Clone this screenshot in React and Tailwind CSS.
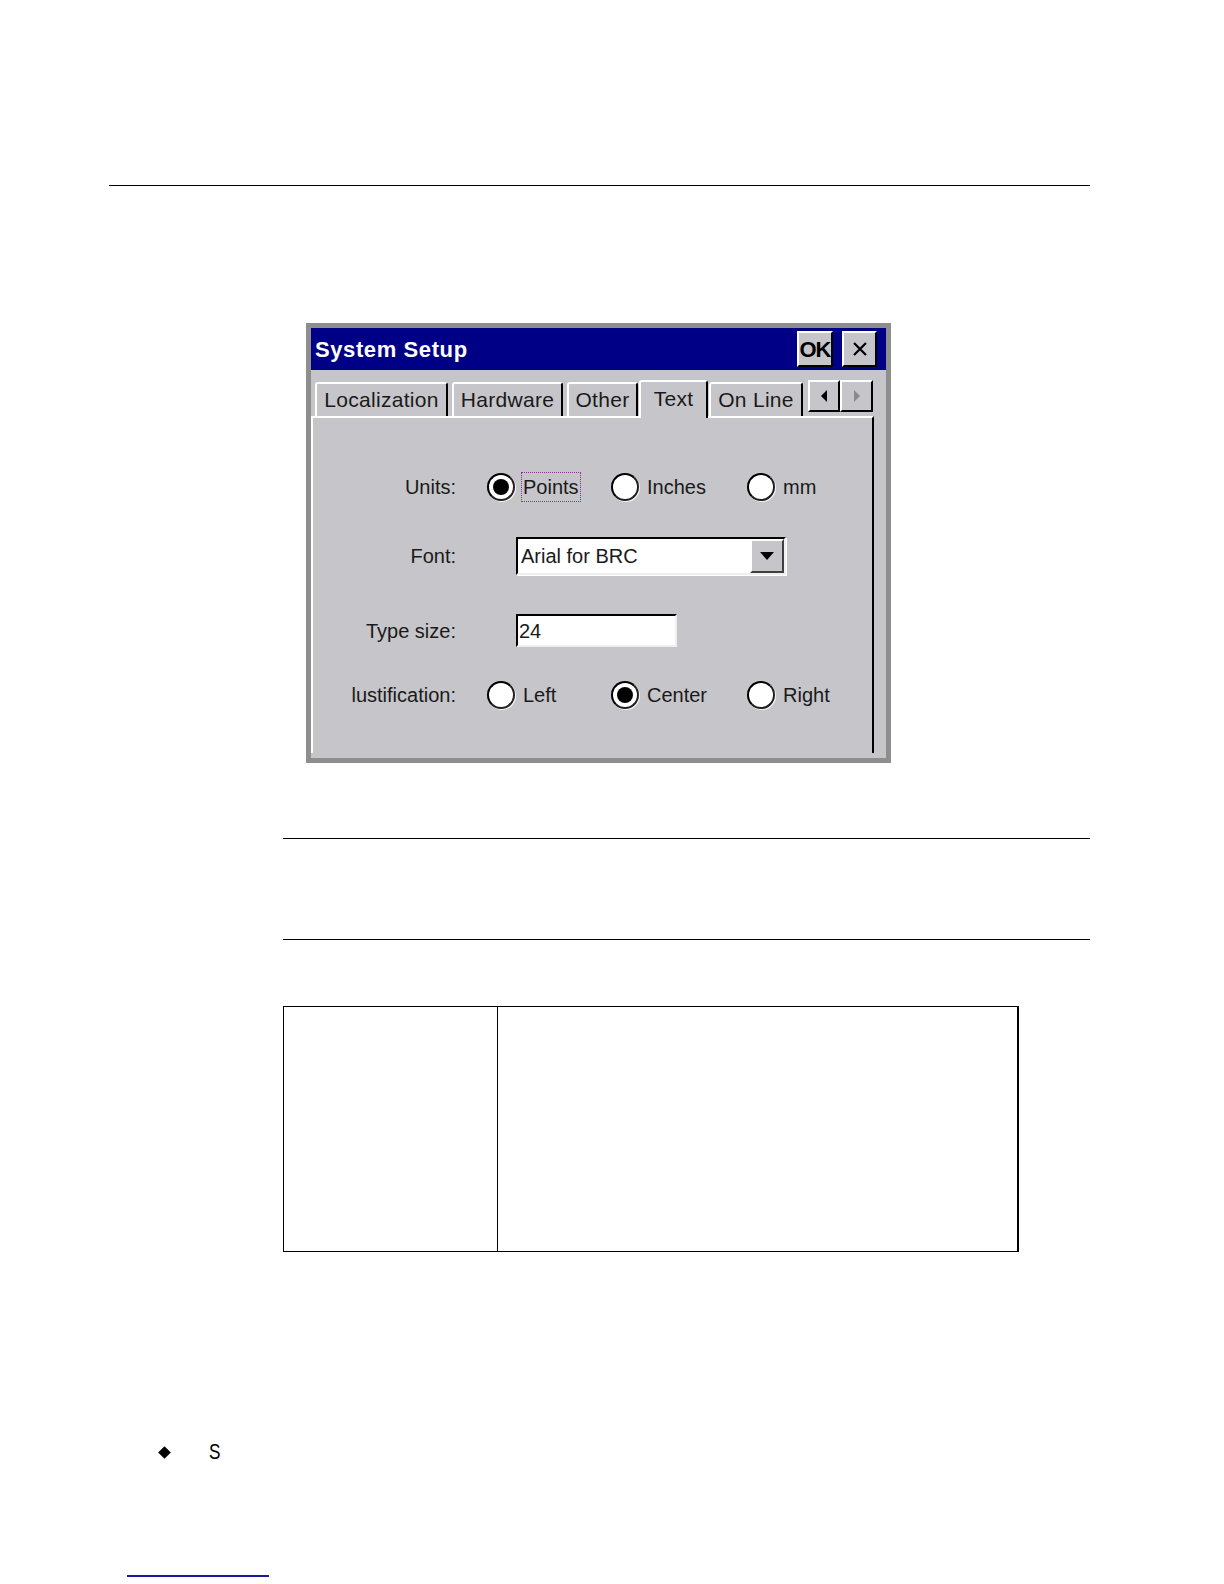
import React from "react";

function Radio({ checked }) {
  return (
    <span className="w-[28px] h-[28px] rounded-full bg-white border-[2.5px] border-t-black border-l-black border-r-[#202020] border-b-[#202020] flex items-center justify-center shadow-[1px_1px_0_#f4f4f4] shrink-0">
      {checked ? <span className="w-[16px] h-[16px] rounded-full bg-black" /> : null}
    </span>
  );
}

function RadioItem({ checked, label, focus, w }) {
  return (
    <div className="flex items-center" style={{ width: w }}>
      <Radio checked={checked} />
      {focus ? (
        <span className="ml-[6px] px-[1px] h-[30px] flex items-center border border-dotted border-[#a020a0]">{label}</span>
      ) : (
        <span className="ml-[8px]">{label}</span>
      )}
    </div>
  );
}

function Tab({ label, w, active, ml }) {
  return (
    <div
      style={{ width: w, marginLeft: ml }}
      className={
        active
          ? "h-[38px] relative z-10 -mb-[2px] bg-[#c6c5c9] border-l-2 border-t-2 border-l-white border-t-white border-r-2 border-r-black rounded-tl-[3px] rounded-tr-[3px] flex items-center justify-center pb-[2px] text-[21px] tracking-[0.3px]"
          : "h-[34px] bg-[#c6c5c9] border-l-2 border-t-2 border-l-white border-t-white border-r-2 border-r-black rounded-tl-[3px] rounded-tr-[3px] flex items-center justify-center text-[21px] tracking-[0.3px]"
      }
    >
      {label}
    </div>
  );
}

export default function App() {
  return (
    <div className="w-[1224px] h-[1584px] bg-white overflow-hidden font-['Liberation_Sans',Arial,sans-serif] text-black">
      <div className="pt-[185px]">
        <div className="ml-[109px] w-[981px] h-px bg-black" />
      </div>

      {/* Dialog screenshot */}
      <div className="mt-[137px] ml-[306px] w-[585px] h-[440px] bg-[#8e8e8e] p-[5px]">
        <div className="w-full h-full bg-[#c6c5c9] flex flex-col text-[20px] text-[#1a1a1a]">
          {/* Title bar */}
          <div className="h-[42px] bg-[#000086] flex items-center justify-between pl-[4px] pr-[9px]">
            <span className="text-white font-bold text-[22px] tracking-[0.6px]">System Setup</span>
            <div className="flex items-center gap-[9px]">
              <div className="w-[36px] h-[36px] bg-[#c6c5c9] border-t-2 border-l-2 border-t-white border-l-white border-b-2 border-r-2 border-b-black border-r-black flex items-center justify-center text-[22px] font-bold text-black tracking-[-1px]">
                OK
              </div>
              <div className="w-[35px] h-[36px] bg-[#c6c5c9] border-t-2 border-l-2 border-t-white border-l-white border-b-2 border-r-2 border-b-black border-r-black flex items-center justify-center">
                <svg width="18" height="18" viewBox="0 0 18 18">
                  <path d="M3 3 L15 15 M15 3 L3 15" stroke="#000" strokeWidth="2.2" />
                </svg>
              </div>
            </div>
          </div>

          {/* Tabs row */}
          <div className="h-[46px] flex items-end">
            <Tab label="Localization" w={133} ml={4} />
            <Tab label="Hardware" w={111} ml={4} />
            <Tab label="Other" w={71} ml={4} />
            <Tab label="Text" w={69} ml={1} active />
            <Tab label="On Line" w={94} ml={1} />
            <div className="ml-[5px] mb-[4px] h-[32px] w-[65px] flex">
              <div className="w-[32px] h-full bg-[#c6c5c9] border-t-2 border-l-2 border-t-white border-l-white border-b-2 border-r-2 border-b-black border-r-black flex items-center justify-center">
                <svg width="8" height="12" viewBox="0 0 8 12"><path d="M7 0 L1 6 L7 12 Z" fill="#000" /></svg>
              </div>
              <div className="w-[33px] h-full bg-[#c6c5c9] border-t-2 border-l-2 border-t-white border-l-white border-b-2 border-r-2 border-b-black border-r-black flex items-center justify-center">
                <svg width="8" height="12" viewBox="0 0 8 12"><path d="M1 0 L7 6 L1 12 Z" fill="#8a8a8a" /></svg>
              </div>
            </div>
          </div>

          {/* Tab body */}
          <div className="flex-1 mr-[12px] mb-[5px] border-l-2 border-l-white border-t-2 border-t-white border-r-2 border-r-black flex flex-col">
            {/* Units */}
            <div className="mt-[54px] h-[30px] flex items-center">
              <div className="w-[143px] text-right">Units:</div>
              <div className="ml-[31px] flex items-center">
                <RadioItem checked label="Points" focus w={124} />
                <RadioItem label="Inches" w={136} />
                <RadioItem label="mm" w={100} />
              </div>
            </div>

            {/* Font */}
            <div className="mt-[35px] h-[38px] flex items-center">
              <div className="w-[143px] text-right">Font:</div>
              <div className="ml-[60px] w-[270px] h-[38px] bg-white border-2 border-t-black border-l-black border-b-[#efefef] border-r-[#efefef] shadow-[1px_1px_0_#ffffff] flex items-center justify-between">
                <span className="pl-[3px]">Arial for BRC</span>
                <div className="w-[34px] h-[34px] bg-[#c6c5c9] border-t-2 border-l-2 border-t-white border-l-white border-b-2 border-r-2 border-b-[#404040] border-r-[#404040] flex items-center justify-center">
                  <svg width="14" height="8" viewBox="0 0 14 8"><path d="M0 0 L14 0 L7 8 Z" fill="#000" /></svg>
                </div>
              </div>
            </div>

            {/* Type size */}
            <div className="mt-[39px] h-[33px] flex items-center">
              <div className="w-[143px] text-right">Type size:</div>
              <div className="ml-[60px] w-[161px] h-[33px] bg-white border-2 border-t-black border-l-black border-b-[#efefef] border-r-[#efefef] flex items-center">
                <span className="pl-[1px]">24</span>
              </div>
            </div>

            {/* Justification */}
            <div className="mt-[33px] h-[30px] flex items-center">
              <div className="w-[143px] text-right">lustification:</div>
              <div className="ml-[31px] flex items-center">
                <RadioItem label="Left" w={124} />
                <RadioItem checked label="Center" w={136} />
                <RadioItem label="Right" w={100} />
              </div>
            </div>
          </div>
        </div>
      </div>

      <div className="mt-[75px] ml-[283px] w-[807px] h-px bg-black" />
      <div className="mt-[100px] ml-[283px] w-[807px] h-px bg-black" />

      {/* Table */}
      <div className="mt-[66px] ml-[283px] w-[736px] h-[246px] border border-black border-r-2 grid grid-cols-[214px_1fr]">
        <div className="border-r border-black" />
        <div />
      </div>

      {/* Bullet */}
      <div className="mt-[188px] ml-[160px] h-[24px] flex items-center">
        <span className="w-[9px] h-[9px] bg-black rotate-45" />
        <span className="ml-[40px] text-[22px] leading-none scale-x-[0.78] origin-left">S</span>
      </div>

      <div className="mt-[111px] ml-[127px] w-[142px] h-[2px] bg-[#1a1a9a]" />
    </div>
  );
}
